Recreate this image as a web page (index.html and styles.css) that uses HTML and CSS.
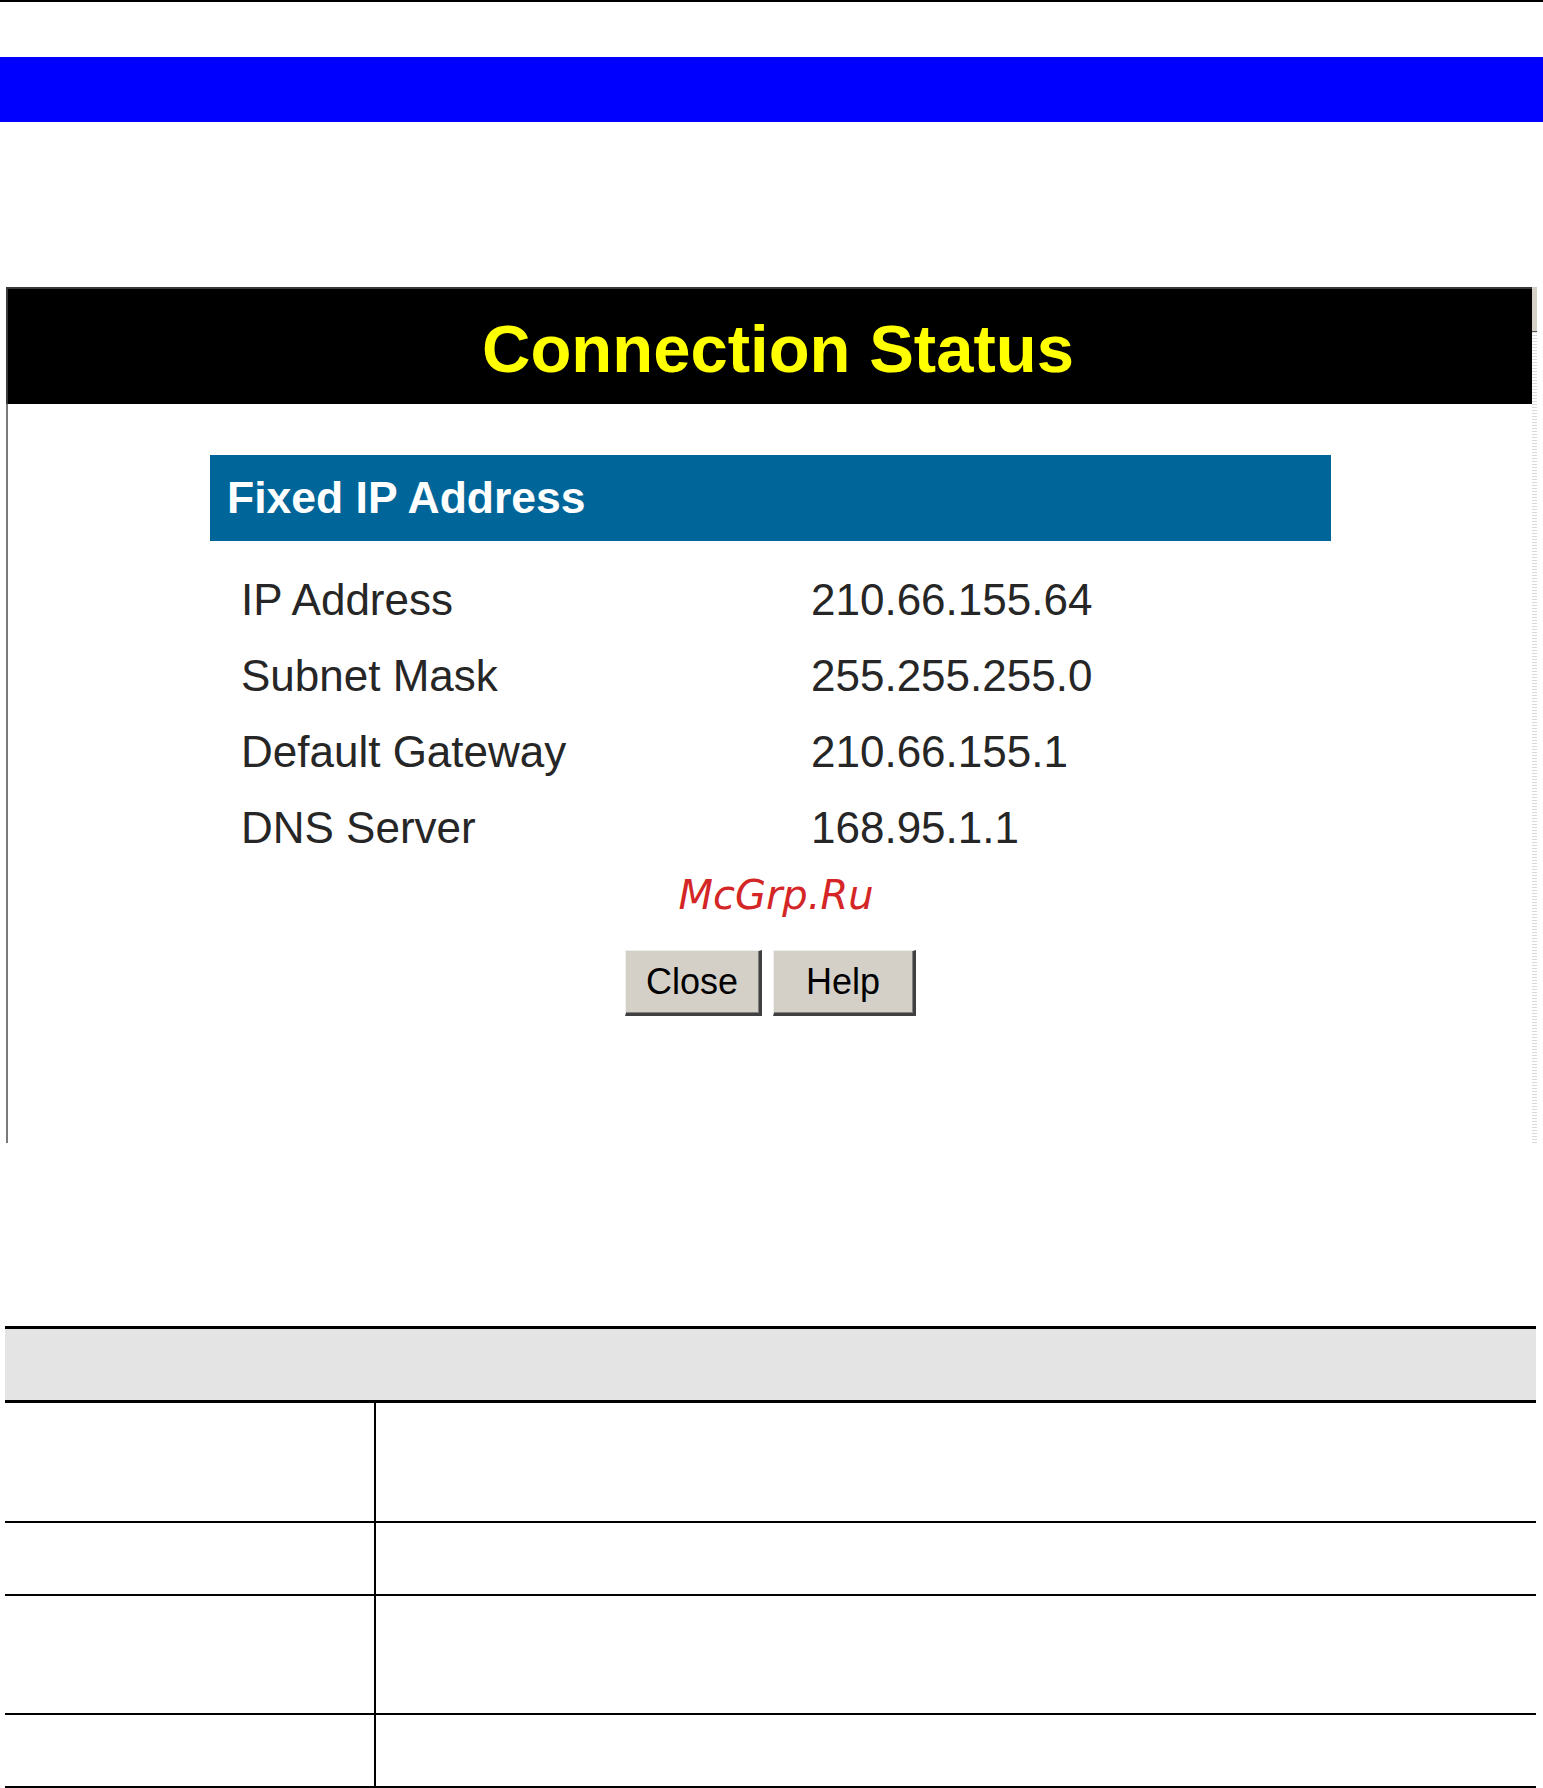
FILE: index.html
```html
<!DOCTYPE html>
<html lang="en">
<head>
<meta charset="utf-8">
<title>Connection Status</title>
<link rel="stylesheet" href="styles.css">
</head>
<body>
<div class="top-rule"></div>
<div class="banner"></div>

<div class="window">
  <div class="window-main">
    <div class="win-header">Connection Status</div>
    <div class="win-body">
      <div class="section-bar">Fixed IP Address</div>
      <div class="info-grid">
        <div class="label">IP Address</div><div class="value">210.66.155.64</div>
        <div class="label">Subnet Mask</div><div class="value">255.255.255.0</div>
        <div class="label">Default Gateway</div><div class="value">210.66.155.1</div>
        <div class="label">DNS Server</div><div class="value">168.95.1.1</div>
      </div>
      <div class="watermark">McGrp.Ru</div>
      <div class="buttons">
        <button class="btn btn-close" type="button">Close</button>
        <button class="btn btn-help" type="button">Help</button>
      </div>
    </div>
  </div>
  <div class="scroll-strip">
    <div class="scroll-thumb"></div>
    <div class="scroll-track"></div>
  </div>
</div>

<div class="doc-table">
  <div class="doc-head"></div>
  <div class="doc-row tall"><div class="cell-left"></div><div class="cell-right"></div></div>
  <div class="doc-row short"><div class="cell-left"></div><div class="cell-right"></div></div>
  <div class="doc-row tall2"><div class="cell-left"></div><div class="cell-right"></div></div>
  <div class="doc-row short"><div class="cell-left"></div><div class="cell-right"></div></div>
</div>
</body>
</html>
```

FILE: styles.css
```css
html, body {
  margin: 0;
  padding: 0;
  background: #ffffff;
}

body {
  font-family: "Liberation Sans", Arial, sans-serif;
  color: #1a1a1a;
}

.top-rule {
  height: 2px;
  background: #000000;
}

.banner {
  margin-top: 55px;
  height: 65px;
  background: #0000ff;
}

/* ---------- dialog window ---------- */
.window {
  margin: 165px 6px 0 6px;
  display: flex;
  height: 856px;
}

.window-main {
  flex: 1;
  display: flex;
  flex-direction: column;
}

.win-header {
  box-sizing: content-box;
  border-top: 2px solid #3a3a3a;
  border-left: 2px solid #3a3a3a;
  background: #000000;
  color: #ffff00;
  font-family: "Liberation Sans", Arial, sans-serif;
  font-weight: bold;
  font-size: 67px;
  line-height: 67px;
  padding-top: 26px;
  height: 89px;
  padding-left: 16px;
  text-align: center;
}

.win-body {
  flex: 1;
  border-left: 2px solid #7a7a7a;
  background: #ffffff;
  display: flex;
  flex-direction: column;
}

.section-bar {
  margin: 51px 0 0 202px;
  width: 1121px;
  height: 86px;
  background: #006699;
  color: #ffffff;
  font-weight: bold;
  font-size: 44.5px;
  display: flex;
  align-items: center;
  padding-left: 17px;
  box-sizing: border-box;
}

.info-grid {
  margin: 21px 0 0 233px;
  display: grid;
  grid-template-columns: 570px auto;
  grid-auto-rows: 76px;
  font-size: 44px;
  line-height: 76px;
  color: #262626;
}

.watermark {
  margin-top: 6px;
  padding-left: 12px;
  text-align: center;
  font-family: "DejaVu Sans", Verdana, sans-serif;
  font-style: italic;
  font-size: 40px;
  line-height: 46px;
  color: #d42626;
}

.buttons {
  margin-top: 32px;
  display: flex;
  justify-content: center;
  gap: 11px;
}

.btn {
  height: 66px;
  padding: 0;
  background: #d4d0c8;
  border-style: solid;
  border-width: 1px 3px 3px 1px;
  border-color: #eeeeee #404040 #404040 #eeeeee;
  box-shadow: inset -1px -1px 0 #808080;
  font-family: "Liberation Sans", Arial, sans-serif;
  font-size: 36px;
  color: #000000;
  text-align: center;
}

.btn-close { width: 137px; }
.btn-help { width: 143px; }

.scroll-strip {
  width: 5px;
  display: flex;
  flex-direction: column;
}

.scroll-thumb {
  height: 44px;
  background: #d4d0c8;
  border-bottom: 1px solid #555555;
}

.scroll-track {
  flex: 1;
  background: repeating-linear-gradient(to bottom, #d8d8d8 0, #d8d8d8 1px, #ffffff 1px, #ffffff 3px);
}

/* ---------- bottom table ---------- */
.doc-table {
  margin: 183px 7px 0 5px;
  border-top: 3px solid #000000;
}

.doc-head {
  height: 71px;
  background: #e4e4e4;
  border-bottom: 3px solid #000000;
}

.doc-row {
  display: flex;
  border-bottom: 2px solid #000000;
}

.doc-row.tall { height: 118px; }
.doc-row.tall2 { height: 117px; }
.doc-row.short { height: 71px; }

.cell-left {
  width: 369px;
  border-right: 2px solid #000000;
}

.cell-right {
  flex: 1;
}
```
